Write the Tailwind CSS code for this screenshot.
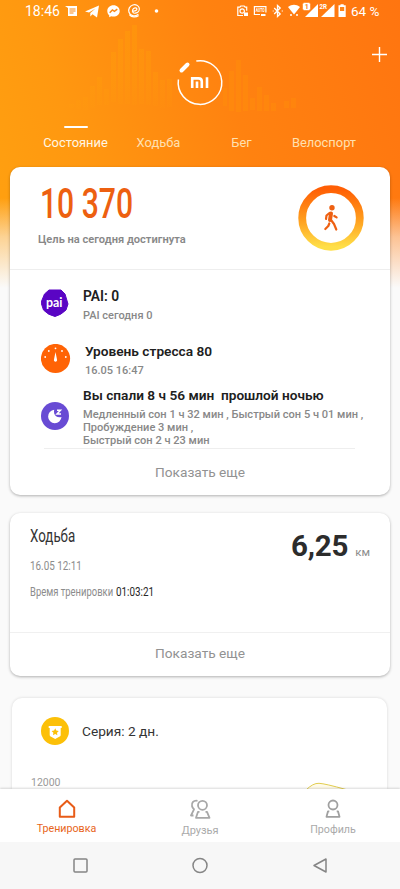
<!DOCTYPE html>
<html lang="ru">
<head>
<meta charset="utf-8">
<meta name="viewport" content="width=device-width, initial-scale=1">
<title>Mi Fit</title>
<script src="https://cdn.jsdelivr.net/npm/@tailwindcss/browser@4"></script>
</head>
<body class="bg-[#fafafa]">
<div class="relative isolate flex h-[889px] w-[400px] flex-col overflow-hidden bg-[#fafafa] font-['Roboto','Noto_Sans',sans-serif]">

  <!-- Header backdrop -->
  <div class="absolute inset-x-0 top-0 -z-10 h-[300px] bg-[linear-gradient(72deg,#ffa210_0%,#ff9810_25%,#ff8210_60%,#ff7510_100%)]">
    <svg class="absolute left-0 top-0" width="400" height="130">
      <defs><linearGradient id="bars" gradientUnits="userSpaceOnUse" x1="0" y1="25" x2="0" y2="112"><stop offset="0" stop-color="#ffb400" stop-opacity=".2"/><stop offset=".6" stop-color="#ffb400" stop-opacity=".13"/><stop offset="1" stop-color="#ffb400" stop-opacity=".02"/></linearGradient></defs>
      <path fill="url(#bars)" d="M69 104h5v4h-5zM76 100h5v9h-5zM83 97h5v13h-5zM90 86h5v22h-5zM97 77h5v28h-5zM104 89h5v16h-5zM111 52h5v50h-5zM118 39h5v65h-5zM125 31h5v73h-5zM132 25h5v80h-5zM139 49h5v55h-5zM146 51h5v54h-5zM153 72h5v34h-5zM160 80h5v28h-5zM167 79h5v28h-5z"/>
      <path fill="#ffa800" fill-opacity=".17" d="M223 88h4v18h-4zM229 71h5v40h-5zM236 60h5v52h-5zM243 75h5v36h-5zM250 98h5v12h-5zM257 87h5v24h-5zM264 95h5v16h-5zM271 103h5v8h-5zM284 101h5v7h-5zM291 98h5v10h-5z"/>
    </svg>
    <div class="absolute inset-0 bg-[linear-gradient(180deg,transparent_66%,#fafafa90_79%,#fafafa_96%)]"></div>
  </div>

  <!-- Status bar -->
  <div class="flex h-[24px] shrink-0 items-center pl-[25px] text-white">
    <span class="w-[39px] text-[14px] leading-[20px] -mt-[2px]">18:46</span>
    <svg width="100" height="24" fill="#fff">
      <path d="M1 6h12v10H4V8z"/><path d="M5.500 9h6M5.500 11h6M5.500 13h4" stroke="#fa8a17" stroke-width="1"/>
      <path d="M21 11.500 35 5.500 33 17.500 28.500 14.300 26.300 16.500V13L31.500 8.500 25 12.600z"/>
      <path d="M49.500 5.200c-3.600 0-6.200 2.500-6.200 5.800 0 1.800.7 3.300 1.900 4.300v2l2-1c.8.2 1.500.3 2.300.3 3.600 0 6.200-2.400 6.200-5.600s-2.600-5.800-6.200-5.800z"/>
      <path d="m45.700 12.700 2.700-2.800 2 1.500 2.900-2.200" stroke="#fa8a17" stroke-width="1.500" fill="none"/>
      <g fill="none" stroke="#fff" stroke-width="1.200" stroke-linecap="round"><path d="M68.800 11c2.200.2 4.200-.5 4.100-2-.2-1.700-3.400-1.400-4.200.8-.8 2.300.6 3.700 2.600 3.400 2.400-.4 4.400-2.400 4-5-.5-2.800-3.600-4.100-6.500-3.200-3.200 1-4.800 4.300-3.800 7.200 1.100 3.500 5.700 4.800 9 2.300"/><path d="M65.800 15c1.900 2.300 6 2.600 8.500.8"/></g>
      <circle cx="92.500" cy="11" r="1.800"/>
    </svg>
    <svg class="ml-[73px]" width="112" height="24" fill="#fff">
      <g fill="none" stroke="#fff" stroke-width="1.200">
        <path d="M6 15.500H.800V7.200h2l1-1.200h3.400l1 1.200h1.500v3.500"/><circle cx="5.200" cy="11" r="2.200"/>
        <path d="M23 14.500h-5.600V6.600h11.500v6"/>
        <path d="m37.200 8 6 6-2.700 2.500V5.500L43.200 8l-6 6" stroke-width="1.300"/><path d="M35.700 11h1M44.700 11h1.200"/>
      </g>
      <rect x="7" y="12.500" width="4" height="3.500"/>
      <text x="18.700" y="12.300" font-size="4.500" font-weight="700" textLength="9" lengthAdjust="spacingAndGlyphs">AUTO</text><path d="M24 14h4.500v2H24z"/>
      <path d="M51 7c4-3 8-3 12 0l-6 7.500z"/><circle cx="54" cy="15" r="1"/><circle cx="60" cy="15" r="1"/>
      <path d="M68 17h13V4z"/><rect x="65.500" y="2.500" width="8" height="8" rx="2" stroke="#ff7e10" stroke-width=".6"/><text x="67.700" y="9" font-size="7" font-weight="700" fill="#f58020">1</text>
      <path d="M84 17h13.500V4z"/><text x="82.500" y="8.500" font-size="6.500" font-weight="700" textLength="7.500" lengthAdjust="spacingAndGlyphs">2R</text>
      <path d="M101.500 5.300h2V4.200h3.200v1.100h2V17h-7.200z"/><path d="M103 7h4.200v4H103z" fill="#ff8517"/>
    </svg>
    <span class="ml-[2px] -mt-[2px] whitespace-nowrap text-[13.500px] leading-[20px]">64 %</span>
  </div>

  <!-- Logo and add button -->
  <div class="relative flex h-[102px] shrink-0 justify-center">
    <svg class="mt-[32px]" width="50" height="52" fill="none" stroke="#fff">
      <path d="M21.300 5.100A21.800 21.800 0 1 1 3.400 23.500" stroke-width="1.500"/>
      <path d="m6.500 14.500 6-6" stroke-width="4" stroke-linecap="round"/>
      <path d="M17.200 32V22.400h6.300q3.300 0 3.300 3V32M22 25.500V32M32 21.200V32" stroke-width="2.600"/>
    </svg>
    <svg class="absolute right-[12px] top-[22px]" width="17" height="17" stroke="#fff" stroke-width="1.400"><path d="M1 8.500h15M8.500 1v15"/></svg>
  </div>

  <!-- Tabs -->
  <div class="flex h-[41px] shrink-0 pl-[34px] text-center text-[12.900px] leading-[16px] text-[#ffe0b0]">
    <div class="flex w-[83px] flex-col items-center text-[#fff6e4]"><i class="mb-[7px] h-[2px] w-[24px] rounded-full bg-white"></i>Состояние</div>
    <div class="w-[83px] pt-[9px]">Ходьба</div>
    <div class="w-[83px] pt-[9px]">Бег</div>
    <div class="w-[82px] pt-[9px]">Велоспорт</div>
  </div>

  <!-- Daily summary -->
  <section class="mx-[10px] flex h-[328px] shrink-0 flex-col rounded-[10px] bg-white shadow-[0_1px_3px_#0000004d]">
    <div class="flex h-[103px] shrink-0 justify-between border-b border-[#eeeeee] pl-[28px] pr-[26px]">
      <div class="flex w-[160px] flex-col">
        <p class="ml-[2px] mt-[11px] w-max origin-left scale-x-[.7] whitespace-nowrap text-[43px] font-medium leading-[51px] text-[#ed6010]">10 370</p>
        <p class="mt-[3px] whitespace-nowrap text-[11.100px] font-semibold leading-[16px] text-[#888]">Цель на сегодня достигнута</p>
      </div>
      <svg class="mt-[18px]" width="66" height="66" fill="none">
        <defs><linearGradient id="ring" x1="0" y1="0" x2="0" y2="1"><stop offset="0" stop-color="#ff5f05"/><stop offset=".5" stop-color="#ff9a1c"/><stop offset="1" stop-color="#ffdf48"/></linearGradient></defs>
        <circle cx="33" cy="33" r="28.800" stroke="url(#ring)" stroke-width="7.800"/>
        <circle cx="34" cy="22.800" r="2.700" fill="#ee6012"/>
        <g stroke="#ee6012" stroke-linecap="round" stroke-linejoin="round">
          <path d="M33 28.500 32 35" stroke-width="4"/>
          <path d="m31.500 28-3 2.500-.5 3.500M36.300 31l2.300 1.400M33 35l3 4 2.300 5.500M31.300 38.500l-1 2.500-3 3" stroke-width="2.200"/>
        </g>
      </svg>
    </div>
    <div class="flex h-[55px] shrink-0 pl-[31px]">
      <svg class="mt-[19px] shrink-0" width="42" height="30"><path d="M8 1h12l4 4 3 10-2 6q-5 5-11 6.500Q7 26 2.500 21L0 13.500 3.500 5z" fill="#5a05c4" stroke="#5a05c4" stroke-linejoin="round"/><text x="5" y="17.500" font-size="13" font-weight="700" fill="#fff" textLength="16.500" lengthAdjust="spacingAndGlyphs" class="font-['Lato',sans-serif]">pai</text></svg>
      <div class="pt-[16px]"><h2 class="text-[13.800px] font-semibold leading-[20px] text-[#202020]">PAI: 0</h2><p class="mt-[1px] text-[11px] font-medium leading-[18px] text-[#888]">PAI сегодня 0</p></div>
    </div>
    <div class="flex h-[51px] shrink-0 pl-[31px]">
      <svg class="mt-[19px] shrink-0" width="44" height="30"><circle cx="14.500" cy="14.500" r="14.600" fill="#ff6305"/><g fill="#fff"><circle cx="4.200" cy="13" r=".9"/><circle cx="7.800" cy="7" r=".9"/><circle cx="14.500" cy="4.300" r=".9"/><circle cx="21" cy="7" r=".9"/><circle cx="24.800" cy="13" r=".9"/><path d="M14.500 8 13 15.500a1.600 1.600 0 1 0 3 0z"/></g></svg>
      <div class="pt-[16px]"><h2 class="text-[13.700px] font-semibold leading-[20px] text-[#202020]">Уровень стресса 80</h2><p class="mt-[1px] text-[11px] font-medium leading-[18px] text-[#888]">16.05 16:47</p></div>
    </div>
    <div class="flex h-[72px] shrink-0 pl-[31px]">
      <svg class="mt-[26px] shrink-0" width="42" height="30"><circle cx="14" cy="14" r="14" fill="#684bd4"/><path d="M13.200 7.800a6.700 6.700 0 1 0 7.300 7.200q-6 1-7.300-3.500-.4-2 0-3.700z" fill="#fff"/><path d="M16 8.200h3.500L16 11.900h4" fill="none" stroke="#fff" stroke-width="1.500"/></svg>
      <div class="pt-[9px]"><h2 class="whitespace-pre text-[13.650px] font-semibold leading-[20px] text-[#202020]">Вы спали 8 ч 56 мин  прошлой ночью</h2><p class="mt-[3px] whitespace-nowrap text-[11.070px] font-medium leading-[13px] text-[#888]">Медленный сон 1 ч 32 мин , Быстрый сон 5 ч 01 мин ,<br>Пробуждение 3 мин ,<br>Быстрый сон 2 ч 23 мин</p></div>
    </div>
    <div class="ml-[34px] mr-[35px] flex flex-1 items-center justify-center border-t border-[#eeeeee] pl-[1px] text-[13.700px] text-[#929292]">Показать еще</div>
  </section>

  <!-- Last workout -->
  <section class="mx-[10px] mt-[18px] flex h-[163px] shrink-0 flex-col rounded-[10px] bg-white shadow-[0_1px_3px_#0000004d]">
    <div class="flex h-[120px] shrink-0 justify-between border-b border-[#f0f0f0] pl-[20px] pr-[20px]">
      <div class="flex w-[150px] flex-col pt-[11px] text-[13.500px] leading-[20px] text-[#8c8c8c]">
        <h2 class="w-max origin-left scale-x-[.72] whitespace-nowrap text-[18.500px] leading-[24px] text-[#333]">Ходьба</h2>
        <p class="mt-[7px] w-max origin-left scale-x-[.73] whitespace-nowrap">16.05 12:11</p>
        <div class="mt-[6px] flex">
          <div class="w-[86px]"><p class="w-max origin-left scale-x-[.7] whitespace-nowrap">Время тренировки</p></div>
          <div class="w-[40px]"><p class="w-max origin-left scale-x-[.73] whitespace-nowrap text-[#262626]">01:03:21</p></div>
        </div>
      </div>
      <div class="flex h-[52px] items-baseline pt-[14px] text-[#2c2c2c]"><b class="text-[29.500px] font-bold leading-[38px] tracking-[-0.2px]">6,25</b><span class="ml-[7px] text-[11.500px] text-[#8c8c8c]">км</span></div>
    </div>
    <div class="flex flex-1 items-center justify-center pb-[3px] text-[13.700px] text-[#929292]">Показать еще</div>
  </section>

  <!-- Streak -->
  <section class="ml-[12px] mr-[13px] mt-[22px] h-[91px] shrink-0 overflow-hidden rounded-t-[10px] bg-white shadow-[0_0_3px_#00000026]">
    <div class="flex h-[66px] items-center pl-[29px]">
      <svg class="shrink-0" width="41" height="28"><circle cx="14" cy="14" r="14" fill="#fcc008"/><path d="M7.700 9h13v2h-1v7q0 1-1 1.500L14.200 22l-4.500-2.500q-1-.5-1-1.500v-7h-1z" fill="#fff"/><path d="m14.200 11.300 1.100 2.300 2.500.4-1.800 1.700.4 2.500-2.200-1.200-2.200 1.200.4-2.500-1.800-1.700 2.500-.4z" fill="#fcc008"/></svg>
      <span class="text-[13.700px] text-[#333]">Серия: 2 дн.</span>
    </div>
    <div class="flex justify-between pl-[19px] pr-[41px]">
      <span class="pt-[12px] text-[10.500px] leading-[14px] text-[#999]">12000</span>
      <svg class="mt-[18px]" width="40" height="12"><path d="M0 8Q7 1 13 1.300T40 7.500V12H0z" fill="#fffbea"/><path d="M0 8Q7 1 13 1.300T40 7.500" fill="none" stroke="#e2cd50"/></svg>
    </div>
  </section>

  <!-- App navigation -->
  <nav class="flex h-[53px] shrink-0 bg-white text-center text-[11px] leading-[14px] text-[#aaa] shadow-[0_-1px_2px_#00000026]">
    <div class="flex w-[133px] flex-col items-center pt-[10px] text-[10.700px] text-[#e8651c]"><svg class="mb-[3px]" width="20" height="20" fill="none" stroke="#e85c18" stroke-width="2" stroke-linejoin="round"><path d="m10 1.700 7.200 6.800v9.300H2.800V8.500z"/></svg>Тренировка</div>
    <div class="flex w-[134px] flex-col items-center pt-[10px]"><svg class="mb-[5px]" width="22" height="20" fill="none" stroke="#a8a8a8" stroke-width="1.800" stroke-linejoin="round"><circle cx="13.500" cy="6.300" r="4.500"/><path d="M10.500 12.800H9L7 18.800h13.500l-2.500-6h-1.500M8.500 1.800C4.500 1 2.300 4 3 7q.4 2 2 3.300L2 16.500h2.500"/></svg>Друзья</div>
    <div class="flex w-[133px] flex-col items-center pt-[10px]"><svg class="mb-[4px] -ml-px" width="20" height="20" fill="none" stroke="#a0a0a0" stroke-width="1.800" stroke-linejoin="round"><circle cx="10" cy="6" r="4.500"/><path d="M6.300 12.300H5l-1.500 5.500h13L15 12.300h-1.300"/></svg><span class="-ml-px text-[10.700px]">Профиль</span></div>
  </nav>

  <!-- System navigation -->
  <div class="flex h-[47px] shrink-0 items-center bg-[#f7f7f7] pl-[73px] pb-[1px]">
    <svg width="254" height="20" fill="none" stroke="#858585" stroke-width="1.500" stroke-linejoin="round"><rect x="1" y="4" width="13" height="13" rx="1"/><circle cx="127" cy="10.500" r="7"/><path d="M253 4v13l-12-6.500z"/></svg>
  </div>
</div>
</body>
</html>
